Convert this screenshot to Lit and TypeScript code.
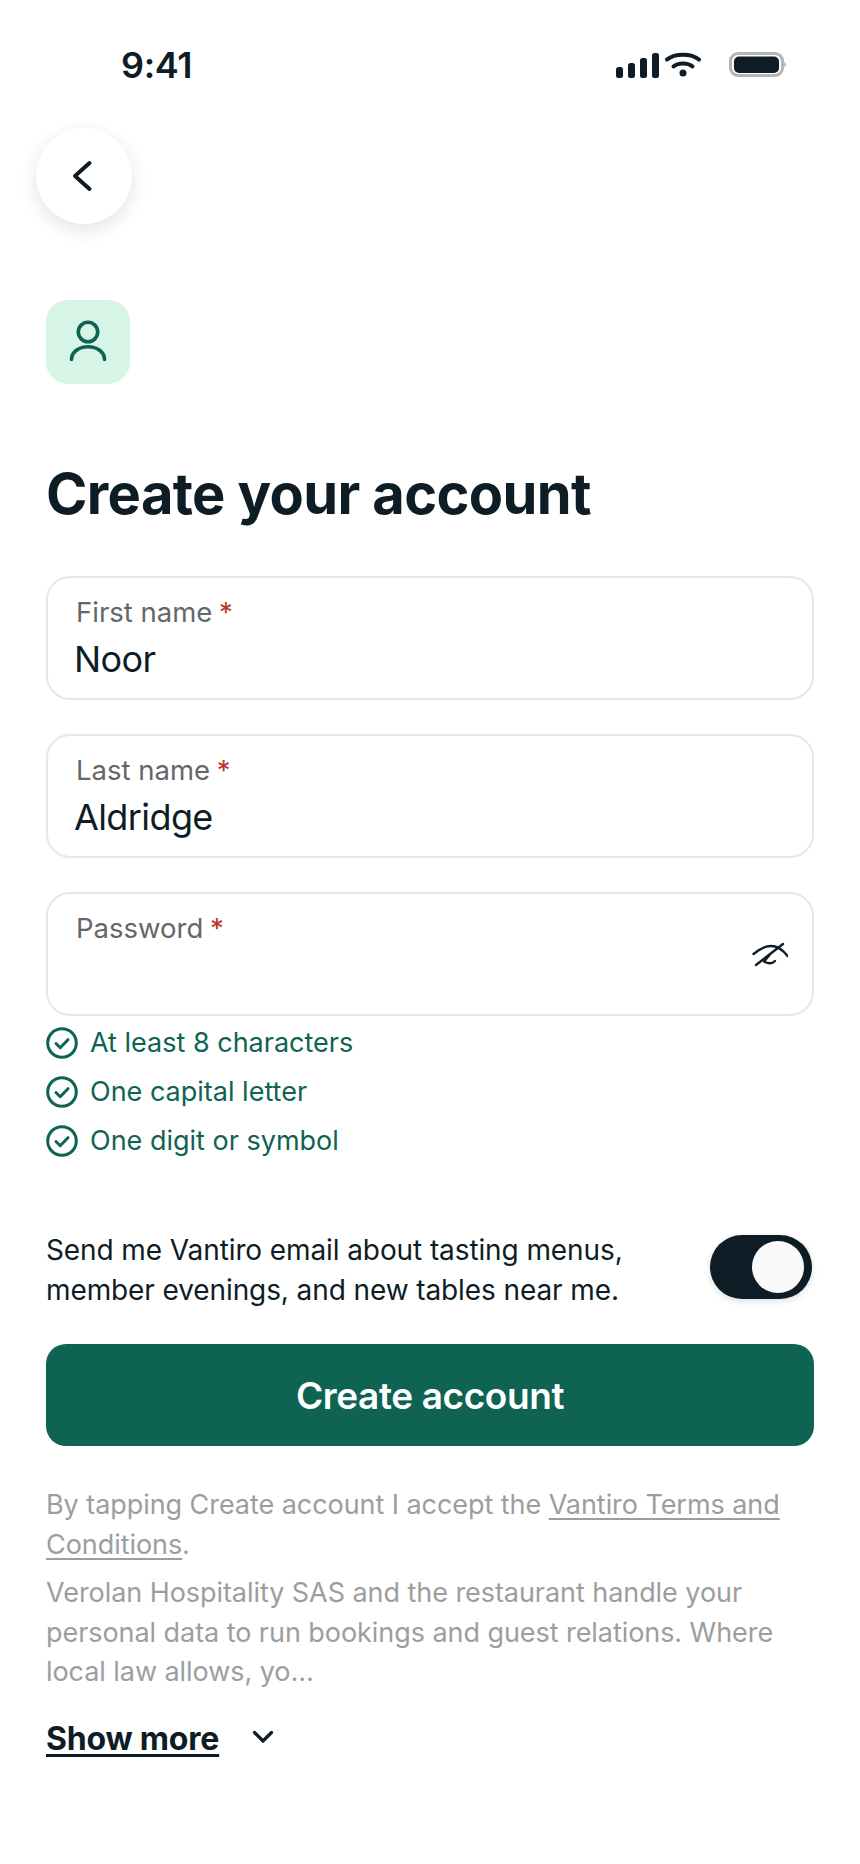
import { LitElement, html, css } from "lit";
import { customElement } from "lit/decorators.js";

const check = html`<svg class="chk" viewBox="0 0 32 32" fill="none" stroke="#0f6353" stroke-width="3" stroke-linecap="round" stroke-linejoin="round"><circle cx="16" cy="16" r="14.300"/><path d="M10 16.500l4.200 4.200 7.800-8"/></svg>`;

@customElement("app-root")
export class AppRoot extends LitElement {
  static styles = css`
    :host { display: block; width: 860px; height: 1864px; background: #fff; font-family: Inter, "Liberation Sans", sans-serif; color: #0e1d25; overflow: hidden; }
    .status { height: 128px; box-sizing: border-box; padding: 44px 0 0 121px; display: flex; align-items: flex-start; }
    .time { font-size: 36px; line-height: 42px; font-weight: 600; letter-spacing: -0.4px; width: 495px; }
    .sig { width: 43px; height: 25px; display: block; margin-top: 9px; }
    .wifi { width: 36px; height: 25px; display: block; margin: 8px 0 0 6px; }
    .bat { width: 58px; height: 25px; display: block; margin: 8px 0 0 28px; }
    .back { width: 96px; height: 96px; margin-left: 36px; border-radius: 50%; background: #fff; box-shadow: 0 6px 18px rgba(14,29,37,.12); display: flex; align-items: center; justify-content: center; }
    .back svg { width: 40px; height: 40px; display: block; }
    .main { padding: 76px 46px 0; }
    .badge { width: 84px; height: 84px; border-radius: 22px; background: #d6f5e6; display: flex; align-items: center; justify-content: center; }
    .badge svg { width: 44px; height: 44px; display: block; }
    h1 { margin: 0; padding-top: 76px; font-size: 56px; line-height: 68px; font-weight: 700; letter-spacing: -0.63px; }
    .fields { display: flex; flex-direction: column; gap: 34px; margin-top: 48px; }
    .field { position: relative; height: 124px; box-sizing: border-box; border: 2px solid #e6e7e7; border-radius: 24px; padding: 17px 27px 0; }
    .lab { font-size: 27.500px; line-height: 34px; color: #63676a; padding-left: 1px; }
    .lab i { font-style: normal; color: #b8352a; margin-left: -1px; }
    .val { font-size: 36px; line-height: 46px; margin: 6.500px 0 0 -1px; letter-spacing: -0.6px; }
    .eye { position: absolute; right: 24px; top: 46px; width: 36px; height: 30px; }
    .rules { list-style: none; margin: 2px 0 0; padding: 0; display: flex; flex-direction: column; }
    .rules li { display: flex; align-items: center; gap: 12px; font-size: 27px; line-height: 49px; color: #0f6353; }
    .chk { width: 32px; height: 32px; display: block; flex: none; }
    .consent { display: flex; justify-content: space-between; align-items: flex-start; margin-top: 65px; }
    .consent p { margin: 0; padding-top: 1px; font-size: 28px; line-height: 39.500px; letter-spacing: -0.1px; }
    .toggle { width: 102px; height: 64px; margin: 5px 2px 0 0; box-sizing: border-box; border-radius: 32px; background: #0e1d25; padding: 6px 8px 6px 42px; box-shadow: 0 2px 6px rgba(14,29,37,.15); flex: none; }
    .toggle span { display: block; width: 52px; height: 52px; border-radius: 50%; background: #fafafa; }
    .cta { height: 102px; border-radius: 20px; background: #0f6353; color: #fff; font-size: 37px; letter-spacing: -0.4px; font-weight: 600; display: flex; align-items: center; justify-content: center; margin-top: 34px; }
    .legal { margin-top: 39px; font-size: 27px; line-height: 39.500px; letter-spacing: -0.06px; color: #9b9e9f; }
    .legal p { margin: 0 0 9px; }
    .legal a { color: inherit; text-decoration: underline; text-underline-offset: 4px; }
    .more { display: flex; align-items: center; margin-top: 27px; gap: 32px; font-size: 32px; line-height: 40px; font-weight: 700; letter-spacing: -0.2px; }
    .more span { text-decoration: underline; text-underline-offset: 4px; }
    .more svg { width: 24px; height: 24px; display: block; margin-top: -4px; }
  `;
  render() {
    return html`
      <div class="status">
        <div class="time">9:41</div>
        <svg class="sig" viewBox="0 0 43 25" fill="#0e1d25"><rect x="0" y="14" width="7" height="11" rx="2.500"/><rect x="12" y="10" width="7" height="15" rx="2.500"/><rect x="24" y="5" width="7" height="20" rx="2.500"/><rect x="36" y="0" width="7" height="25" rx="2.500"/></svg>
        <svg class="wifi" viewBox="0 0 36 25" fill="none" stroke="#0e1d25" stroke-width="4" stroke-linecap="round"><path d="M2 7.500C10 1 26 1 34 7.500"/><path d="M8.500 14.500C13 10.500 23 10.500 27.500 14.500"/><circle cx="18" cy="21" r="3.500" fill="#0e1d25" stroke="none"/></svg>
        <svg class="bat" viewBox="0 0 58 25"><rect x="1.500" y="1.500" width="52" height="22" rx="7.500" fill="none" stroke="#b3b5b7" stroke-width="3"/><rect x="5" y="4.500" width="45" height="16.500" rx="5" fill="#0e1d25"/><path d="M55 10c1.500.5 2.500 1.200 2.500 2.500s-1 2-2.500 2.500z" fill="#c4c6c7"/></svg>
      </div>
      <div class="back"><svg viewBox="0 0 40 40" fill="none" stroke="#0e1d25" stroke-width="4" stroke-linecap="round" stroke-linejoin="round"><path d="M25.500 7L11 20l14.500 13"/></svg></div>
      <div class="main">
        <div class="badge"><svg viewBox="0 0 44 44" fill="none" stroke="#0f6353" stroke-width="3.600" stroke-linecap="round"><circle cx="22" cy="12" r="9.700"/><path d="M5.500 39.500C5.500 32 13 26.700 22 26.700S38.500 32 38.500 39.500"/></svg></div>
        <h1>Create your account</h1>
        <div class="fields">
          <div class="field"><div class="lab">First name <i>*</i></div><div class="val">Noor</div></div>
          <div class="field"><div class="lab">Last name <i>*</i></div><div class="val">Aldridge</div></div>
          <div class="field"><div class="lab">Password <i>*</i></div>
            <svg class="eye" viewBox="0 0 36 30" fill="none" stroke="#0e1d25" stroke-width="2.400" stroke-linecap="round" stroke-linejoin="round"><path d="M1.500 14C8 8.500 14 6 19 6C26 6 31 10 35.500 16"/><path d="M4 25L31 4"/><path d="M17.500 15L12 21.500C15.500 23.500 20 24 23 21"/></svg>
          </div>
        </div>
        <ul class="rules">
          <li>${check}At least 8 characters</li>
          <li>${check}One capital letter</li>
          <li>${check}One digit or symbol</li>
        </ul>
        <div class="consent">
          <p>Send me Vantiro email about tasting menus,<br />member evenings, and new tables near me.</p>
          <div class="toggle"><span></span></div>
        </div>
        <div class="cta">Create account</div>
        <div class="legal">
          <p>By tapping Create account I accept the <a>Vantiro Terms and</a> <a>Conditions</a>.</p>
          <p>Verolan Hospitality SAS and the restaurant handle your personal data to run bookings and guest relations. Where local law allows, yo…</p>
        </div>
        <div class="more"><span>Show more</span><svg viewBox="0 0 24 24" fill="none" stroke="#0e1d25" stroke-width="3.200" stroke-linecap="round" stroke-linejoin="round"><path d="M3.500 7.500l8.500 8.500 8.500-8.500"/></svg></div>
      </div>
    `;
  }
}
